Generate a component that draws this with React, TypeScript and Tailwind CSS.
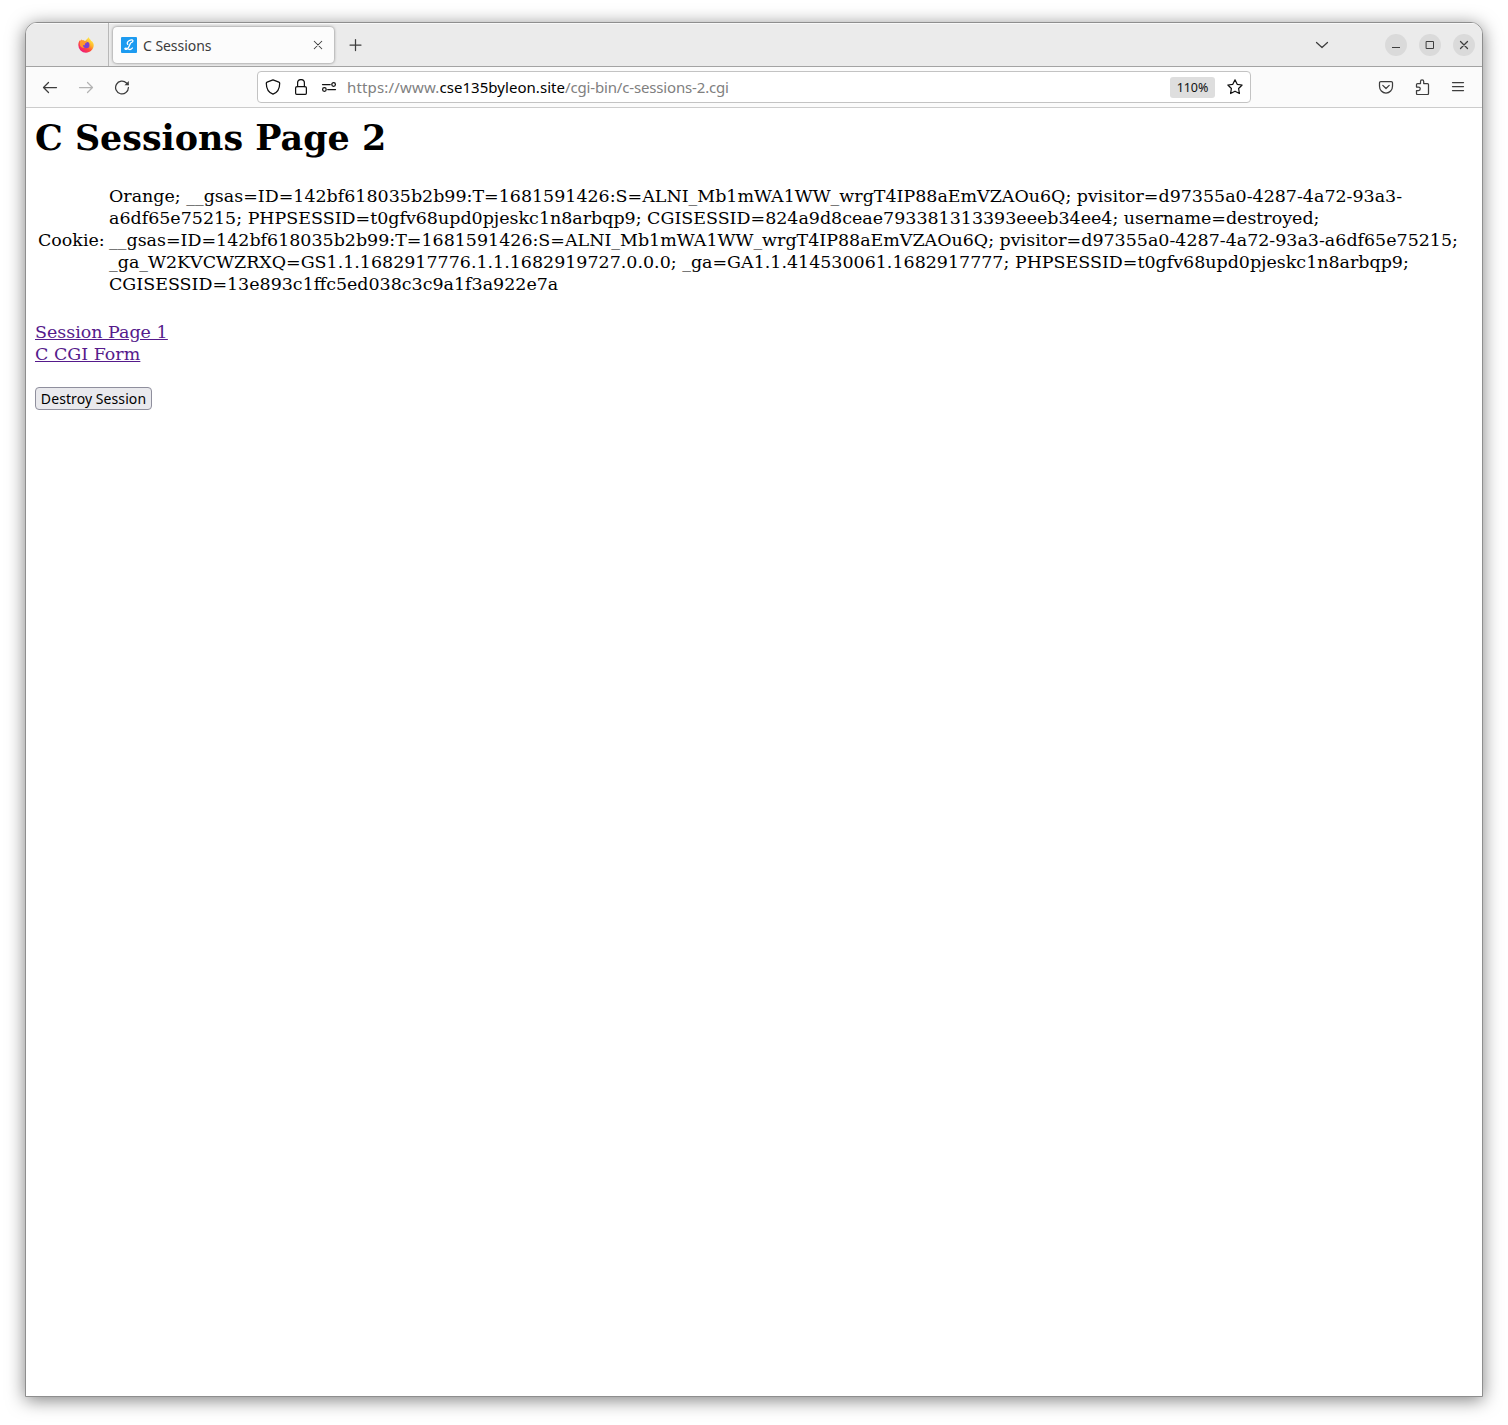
import type { ReactNode } from "react";

function Icon({ children, className = "", size = 16 }: { children: ReactNode; className?: string; size?: number }) {
  return (
    <svg
      width={size}
      height={size}
      viewBox="0 0 16 16"
      fill="none"
      stroke="currentColor"
      strokeWidth="1.25"
      strokeLinecap="round"
      strokeLinejoin="round"
      className={`shrink-0 ${className}`}
    >
      {children}
    </svg>
  );
}

function FirefoxLogo() {
  return (
    <svg width="16" height="16" viewBox="0 0 16 16" className="shrink-0">
      <defs>
        <linearGradient id="flame" x1="0.85" y1="0.1" x2="0.2" y2="0.95">
          <stop offset="0" stopColor="#fff04a" />
          <stop offset="0.35" stopColor="#ffb02a" />
          <stop offset="0.62" stopColor="#ff4a3c" />
          <stop offset="1" stopColor="#ec1580" />
        </linearGradient>
      </defs>
      <path
        d="M10.6.1c.2 1.1.9 1.7 1.7 2.5.4.4.7.9.8 1.4.5 0 1 .3 1.3.7.9 1.1 1.4 2.5 1.3 3.9-.2 4-3.600 7.100-7.700 7.100A7.700 7.700 0 0 1 .3 8c0-1.800.5-3.400 1.500-4.800.1.4.2.6.4.9.3-.8.8-1.400 1.400-1.900 0 .5.100.9.400 1.300 1.100-.3 2.300-.1 3.200.5C8.200 3 9.600 1.900 10.600.1z"
        fill="url(#flame)"
      />
      <circle cx="8.200" cy="8" r="3.300" fill="#7541d5" />
      <path d="M1.900 4.500c1.200-1 2.900-1.200 4.300-.6.5.3.9.7 1.200 1.200H9c-.1.7-1.700 1.100-2 1.600-.3.600.2 1.300-.5 1.500-.6.200-1.100-.2-1.700 0 .2 1.300 1 2.100 2 2.500-2 .6-4.300-.7-5-2.800z" fill="#ff982b" />
    </svg>
  );
}

function WindowButton({ children }: { children: ReactNode }) {
  return <button className="flex size-[22px] items-center justify-center rounded-full bg-[#dadada] text-[#3d3d3d]">{children}</button>;
}

function TabStrip() {
  return (
    <div className="flex h-11 items-center border-b border-[#a3a3a3] bg-[#ebebeb] shadow-[inset_0_1px_0_#f8f8f8]">
      <div className="flex h-full w-[83px] shrink-0 items-center justify-end border-r border-[#b8b8b8] pr-[14px]">
        <FirefoxLogo />
      </div>
      <div className="ml-1 flex h-9 w-[221px] shrink-0 items-center rounded-[4px] bg-[#fcfcfc] pl-2 pr-[10px] shadow-[0_0_3px_rgba(0,0,0,0.5)]">
        <svg width="16" height="16" viewBox="0 0 16 16" className="shrink-0">
          <rect width="16" height="16" rx="1" fill="#1d9bf0" />
          <path
            d="M6.800 7.400C5.600 6.600 6.400 4.600 8.400 3.500c1.900-1 3.800-.7 3.500.6-.2.900-1.400 1.500-2.300 1.900-.9 2.300-1.700 4.900-3.500 6-1.300.8-2.500.3-2.200-.5.500-.9 2.100-.1 3.300.5 1.500.7 3.200.7 4.200-1"
            fill="none"
            stroke="#fff"
            strokeWidth="1.300"
            strokeLinecap="round"
          />
        </svg>
        <span className="ml-1.5 pt-[2px] text-[14px] leading-5 tracking-[-0.05px] text-[#3b3b3b]">C Sessions</span>
        <Icon size={12} className="ml-auto text-[#3d3d3d]">
          <path d="M3 3l10 10M13 3L3 13" strokeWidth="1.400" />
        </Icon>
      </div>
      <Icon className="ml-[14px] mt-px text-[#3d3d3d]">
        <path d="M7.500 2.500v11M2 8h11" />
      </Icon>
      <Icon className="ml-auto mr-[55px] text-[#3d3d3d]">
        <path d="M2.500 5.500L8 10.500l5.500-5" />
      </Icon>
      <div className="mr-[7px] flex gap-3">
        <WindowButton>
          <Icon><path d="M4.500 10.500h7" strokeWidth="1" strokeLinecap="square" /></Icon>
        </WindowButton>
        <WindowButton>
          <Icon><path d="M4.500 4.500h7v7h-7z" strokeWidth="1" strokeLinejoin="miter" /></Icon>
        </WindowButton>
        <WindowButton>
          <Icon><path d="M4.500 4.500l7 7M11.500 4.500l-7 7" /></Icon>
        </WindowButton>
      </div>
    </div>
  );
}

function AddressBar() {
  return (
    <div className="flex h-8 w-[994px] shrink-0 items-center rounded-[4px] border border-[#c3c3c3] bg-white pl-[7px] pr-[7px] text-[#111111]">
      <Icon>
        <path d="M8 .9l5.900 2.200c.5.200.8.600.8 1.100 0 5-1.800 9.100-6.700 11-4.900-1.900-6.700-6-6.700-11 0-.5.300-.9.800-1.100z" />
      </Icon>
      <Icon className="ml-3">
        <rect x="2.600" y="7.600" width="10.800" height="7.800" rx="1.500" />
        <path d="M4.600 7.500V4a3.400 3.400 0 0 1 6.800 0v3.500" />
      </Icon>
      <Icon className="ml-3">
        <path d="M1.500 5.600h7.700M6.700 10.500h7.800" />
        <circle cx="12.600" cy="5.500" r="1.800" />
        <circle cx="3.400" cy="10.500" r="1.800" />
      </Icon>
      <span className="ml-2.5 whitespace-nowrap text-[15px] leading-5 text-[#808080]">
        <span className="tracking-[0.17px]">https://www.</span>
        <span className="tracking-[0.04px] text-black">cse135byleon.site</span>
        <span className="tracking-[-0.16px]">/cgi-bin/c-sessions-2.cgi</span>
      </span>
      <span className="ml-auto flex h-[21px] w-[45px] items-center justify-center rounded-[3px] bg-[#dedede] pt-[2px] text-[12.5px] tracking-[-0.1px]">110%</span>
      <Icon className="ml-3">
        <path d="M8 .8l2.200 4.500 4.900.7-3.500 3.500.8 5L8 12.200l-4.400 2.300.8-5L.9 6l4.900-.7z" />
      </Icon>
    </div>
  );
}

function Toolbar() {
  return (
    <div className="flex h-[41px] items-center border-b border-[#cccccc] bg-[#fbfbfb] text-[#3d3d3d]">
      <div className="flex w-[231px] shrink-0 gap-5 pl-4">
        <Icon><path d="M14.500 8.500h-13M6.500 3.500l-5 5 5 5" /></Icon>
        <Icon className="text-[#b3b3b3]"><path d="M1.500 8.500h13M9.500 3.500l5 5-5 5" /></Icon>
        <Icon>
          <path d="M14.400 8.500A6.400 6.400 0 1 1 12.500 4l1.500 1.500" />
          <path d="M14.800 1.900v4.300h-4.300z" fill="currentColor" stroke="none" />
        </Icon>
      </div>
      <AddressBar />
      <div className="ml-auto mr-4 flex gap-5">
        <Icon>
          <path d="M2.800 2.500h10.400c.8 0 1.300.5 1.300 1.300v3.400C14.500 11 11.700 14 8 14s-6.500-3-6.500-6.800V3.800c0-.8.500-1.300 1.300-1.300z" />
          <path d="M4.800 6.400L8 9.500l3.200-3.100" />
        </Icon>
        <Icon>
          <path d="M2.500 8V5.500c0-.6.400-1 1-1h3v-2a1.600 1.600 0 0 1 3.200 0v2h3.800c.6 0 1 .4 1 1v9c0 .6-.4 1-1 1h-10c-.6 0-1-.4-1-1v-3h2a1.700 1.700 0 0 0 0-3.500z" />
        </Icon>
        <Icon><path d="M2.500 3.500h11M2.500 7.500h11M2.500 11.500h11" /></Icon>
      </div>
    </div>
  );
}

const cookieLines = [
  "Orange; __gsas=ID=142bf618035b2b99:T=1681591426:S=ALNI_Mb1mWA1WW_wrgT4IP88aEmVZAOu6Q; pvisitor=d97355a0-4287-4a72-93a3-",
  "a6df65e75215; PHPSESSID=t0gfv68upd0pjeskc1n8arbqp9; CGISESSID=824a9d8ceae793381313393eeeb34ee4; username=destroyed;",
  "__gsas=ID=142bf618035b2b99:T=1681591426:S=ALNI_Mb1mWA1WW_wrgT4IP88aEmVZAOu6Q; pvisitor=d97355a0-4287-4a72-93a3-a6df65e75215;",
  "_ga_W2KVCWZRXQ=GS1.1.1682917776.1.1.1682919727.0.0.0; _ga=GA1.1.414530061.1682917777; PHPSESSID=t0gfv68upd0pjeskc1n8arbqp9;",
  "CGISESSID=13e893c1ffc5ed038c3c9a1f3a922e7a",
];

function SessionPage() {
  return (
    <main className="px-[9px] pt-[9px] font-['DejaVu_Serif',serif] text-[17.467px] leading-[22px] text-black">
      <h1 className="text-[34.909px] font-bold leading-[42px]">C Sessions Page 2</h1>
      <div className="mt-[26px] flex items-center pl-[3px]">
        <span className="w-[71px] shrink-0">Cookie:</span>
        <div className="whitespace-nowrap">
          {cookieLines.map((line) => (
            <div key={line}>{line}</div>
          ))}
        </div>
      </div>
      <div className="mt-[26px] flex flex-col items-start text-[#551a8b] underline">
        <a href="#page-1">Session Page 1</a>
        <a href="#form">C CGI Form</a>
      </div>
      <button className="mt-[22px] flex h-[23px] w-[117px] items-center justify-center whitespace-nowrap rounded-[4px] border border-[#8f8f9d] bg-[#e9e9ed] font-['Noto_Sans',sans-serif] text-[14px] leading-5 tracking-[0.08px]">
        Destroy Session
      </button>
    </main>
  );
}

export default function App() {
  return (
    <div className="h-[1425px] w-[1508px] overflow-hidden bg-white pl-[25px] pt-[22px] font-['Noto_Sans',sans-serif]">
      <div className="h-[1375px] w-[1458px] overflow-hidden rounded-t-[12px] border border-[#8e8e8e] bg-white shadow-[0_3px_18px_rgba(0,0,0,0.5)]">
        <TabStrip />
        <Toolbar />
        <SessionPage />
      </div>
    </div>
  );
}
